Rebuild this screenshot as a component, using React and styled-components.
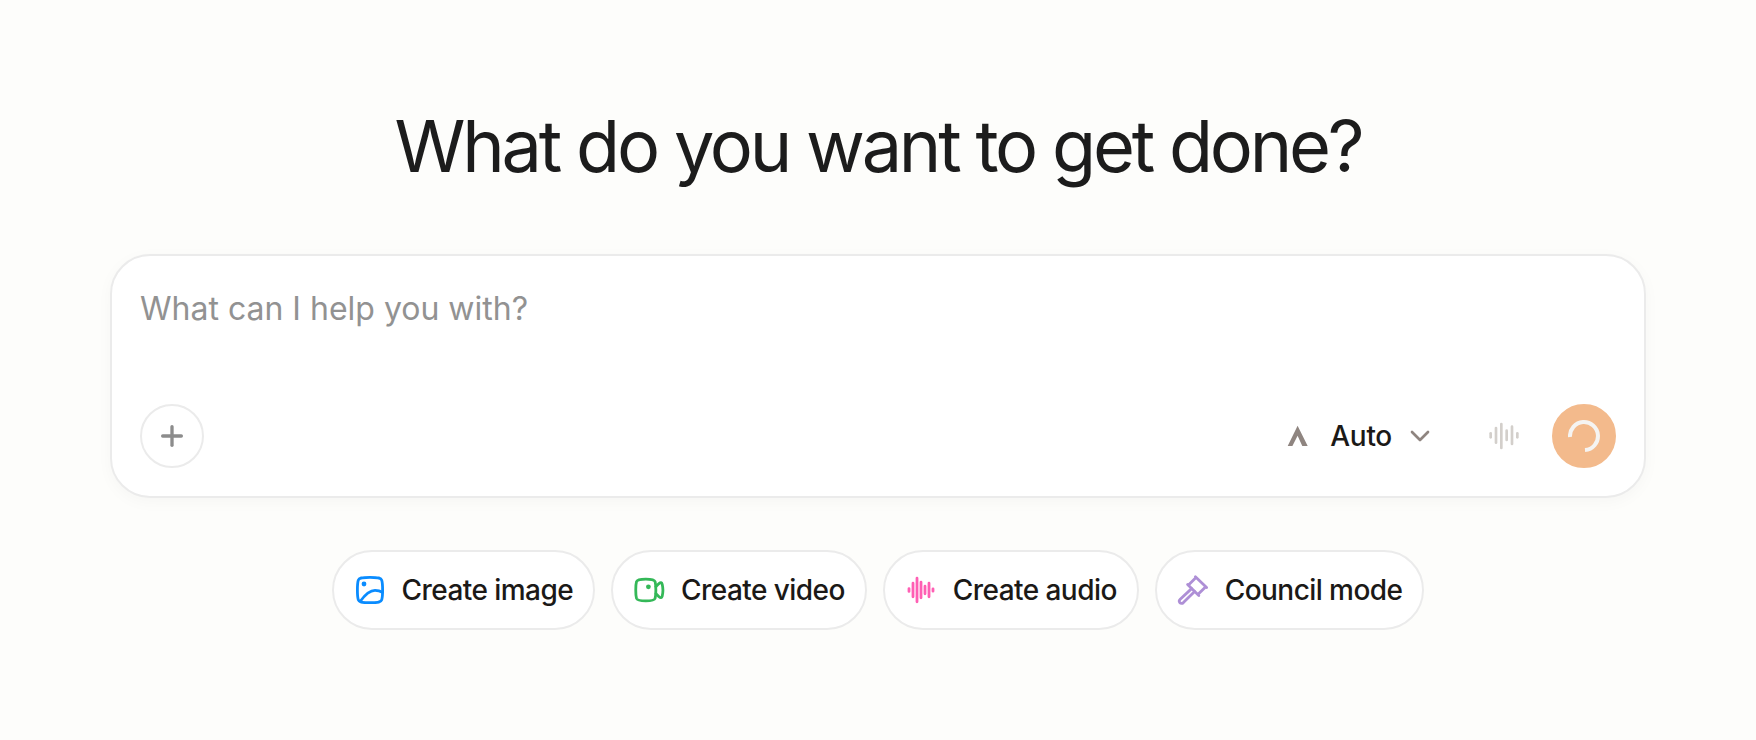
import React from 'react';
import styled, { createGlobalStyle } from 'styled-components';
import { AudioLines, ChevronDown, Plus } from 'lucide-react';

const GlobalStyle = createGlobalStyle`
  *, *::before, *::after { box-sizing: border-box; }
  body {
    margin: 0;
    background: #fdfdfb;
    color: #1c1c1c;
    font-family: Inter, "Liberation Sans", sans-serif;
  }
  button, textarea { font: inherit; color: inherit; }
`;

const Page = styled.main`
  min-height: 100vh;
  display: flex;
  flex-direction: column;
  align-items: center;
  justify-content: center;
  padding: 48px 110px;
`;

const Title = styled.h1`
  margin: 0 0 72px;
  font-size: 72px;
  line-height: 72px;
  font-weight: 400;
  letter-spacing: -0.045em;
  text-align: center;
`;

const Composer = styled.form`
  width: 100%;
  max-width: 1536px;
  display: flex;
  flex-direction: column;
  gap: 24px;
  padding: 28px;
  border: 2px solid #ebebeb;
  border-radius: 40px;
  background: #fff;
  box-shadow: 0 4px 16px rgba(0, 0, 0, 0.03);
`;

const Prompt = styled.textarea`
  display: block;
  width: 100%;
  height: 96px;
  padding: 0;
  border: 0;
  outline: 0;
  resize: none;
  background: transparent;
  font-size: 32px;
  line-height: 50px;
  &::placeholder { color: #929292; opacity: 1; }
`;

const Toolbar = styled.div`
  display: flex;
  align-items: center;
  justify-content: space-between;
`;

const Actions = styled.div`
  display: flex;
  align-items: center;
  gap: 16px;
`;

const RoundButton = styled.button`
  display: flex;
  align-items: center;
  justify-content: center;
  width: 64px;
  height: 64px;
  padding: 0;
  border: 2px solid ${(p) => p.$border || 'transparent'};
  border-radius: 50%;
  background: ${(p) => p.$fill || 'transparent'};
  color: ${(p) => p.$color};
`;

const ModelButton = styled.button`
  display: flex;
  align-items: center;
  height: 64px;
  padding: 0 20px;
  border: 0;
  background: transparent;
  color: #8f8580;
`;

const ModelName = styled.span`
  margin: 0 12px 0 16px;
  font-size: 28px;
  line-height: 40px;
  font-weight: 500;
  letter-spacing: -0.01em;
  color: #1b1917;
`;

const Chips = styled.div`
  display: flex;
  flex-wrap: wrap;
  justify-content: center;
  gap: 16px;
  margin-top: 52px;
`;

const Chip = styled.button`
  display: flex;
  align-items: center;
  gap: 16px;
  height: 80px;
  padding: 0 20px;
  border: 2px solid #ebebeb;
  border-radius: 40px;
  background: #fff;
  font-size: 28px;
  font-weight: 500;
  letter-spacing: -0.02em;
  color: #1b1917;
  white-space: nowrap;
`;

const Icon = styled.svg.attrs({
  width: 32,
  height: 32,
  viewBox: '0 0 32 32',
  fill: 'none',
  'aria-hidden': true,
})`
  flex: none;
  stroke: ${(p) => p.$color};
  stroke-width: 2.8;
  stroke-linecap: round;
  stroke-linejoin: round;
`;

const ImageIcon = () => (
  <Icon $color="#0a8cff">
    <path d="M16 3.3C24.5 3.3 27 4 27.7 6.2C28.9 10 28.9 22 27.7 25.8C27 28 24.5 28.7 16 28.7C7.5 28.7 5 28 4.3 25.8C3.1 22 3.1 10 4.3 6.2C5 4 7.5 3.3 16 3.3Z" />
    <path d="M6.3 27.2C11.5 20 16 16.3 21 16.3C23.8 16.3 26.3 17 28.4 18.3" />
    <circle cx="10" cy="10" r="2.4" fill="#0a8cff" stroke="none" />
  </Icon>
);

const VideoIcon = () => (
  <Icon $color="#34b858">
    <path d="M12.8 5.1C19.2 5.1 21.4 5.6 22.1 7.6C23.1 11 23.1 21 22.1 24.4C21.4 26.4 19.2 26.9 12.8 26.9C6.4 26.9 4.2 26.4 3.5 24.4C2.5 21 2.5 11 3.5 7.6C4.2 5.6 6.4 5.1 12.8 5.1Z" />
    <path d="M23 12.6L26 9.6C27.6 8.2 28.8 8.5 29.2 10.2C30 13.6 30 19 29.2 22.2C28.8 24 27.6 24.2 26 22.8L23 19.8" />
    <circle cx="15.4" cy="12.8" r="2.4" fill="#34b858" stroke="none" />
  </Icon>
);

const WaveIcon = () => (
  <Icon $color="#ff5fb4">
    <path d="M4 14.6v2.8M8 9.2v13.6M12 4.2v23.6M16 8.2v15.6M20 12.2v7.6M24 9.2v13.6M28 14.8v2.4" />
  </Icon>
);

const GavelIcon = () => (
  <Icon $color="#ae8fd6">
    <path d="M18.4 2.8L29.6 13.6M10.6 10.4L21.8 21.4M18 4.6L12 10.6M28 13.4L21.6 19.8" />
    <path d="M14.6 14.6L3.2 25.2C0.8 27.6 3.8 31 6.4 28.6L17.6 17.6" />
  </Icon>
);

const ModelIcon = () => (
  <svg width="32" height="32" viewBox="0 0 32 32" aria-hidden="true">
    <path d="M5.7 26L15.6 5.8L25.7 26H20.3L15.6 15.8L10.4 26Z" fill="#8f8580" />
  </svg>
);

const Spinner = () => (
  <svg width="32" height="32" viewBox="0 0 32 32" fill="none" aria-hidden="true">
    <path d="M2 17A14 14 0 1 1 17 30" stroke="#f5f4f2" strokeWidth="4" />
  </svg>
);

const suggestions = [
  { label: 'Create image', Glyph: ImageIcon },
  { label: 'Create video', Glyph: VideoIcon },
  { label: 'Create audio', Glyph: WaveIcon },
  { label: 'Council mode', Glyph: GavelIcon },
];

export default function App() {
  return (
    <>
      <GlobalStyle />
      <Page>
        <Title>What do you want to get done?</Title>
        <Composer onSubmit={(e) => e.preventDefault()}>
          <Prompt aria-label="Prompt" placeholder="What can I help you with?" />
          <Toolbar>
            <RoundButton type="button" aria-label="Add attachment" $border="#ebebeb" $color="#8c8c8c">
              <Plus size={32} strokeWidth={2.5} />
            </RoundButton>
            <Actions>
              <ModelButton type="button" aria-haspopup="listbox">
                <ModelIcon />
                <ModelName>Auto</ModelName>
                <ChevronDown size={32} />
              </ModelButton>
              <RoundButton type="button" aria-label="Voice input" $color="#d3cfcb">
                <AudioLines size={32} />
              </RoundButton>
              <RoundButton type="submit" aria-label="Send" $border="#f3ba8c" $fill="#f3ba8c">
                <Spinner />
              </RoundButton>
            </Actions>
          </Toolbar>
        </Composer>
        <Chips>
          {suggestions.map(({ label, Glyph }) => (
            <Chip key={label} type="button">
              <Glyph />
              {label}
            </Chip>
          ))}
        </Chips>
      </Page>
    </>
  );
}
